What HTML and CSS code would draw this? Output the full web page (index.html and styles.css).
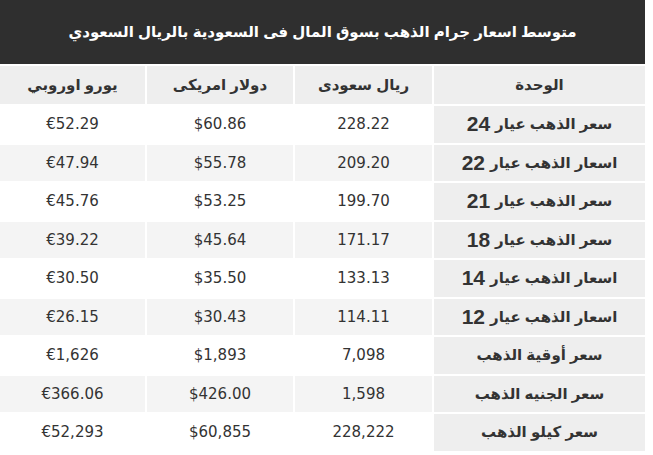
FILE: index.html
```html
<!DOCTYPE html>
<html lang="ar">
<head>
<meta charset="utf-8">
<link rel="stylesheet" href="styles.css">
</head>
<body>
<div class="wrap" dir="rtl">
  <div class="title">متوسط اسعار جرام الذهب بسوق المال فى السعودية بالريال السعودي</div>
  <div class="grid">
    <div class="th">الوحدة</div><div class="th">ريال سعودى</div><div class="th">دولار امريكى</div><div class="th">يورو اوروبي</div>

    <div class="lbl">سعر الذهب عيار <b>24</b></div><div class="c">228.22</div><div class="c">$60.86</div><div class="c">€52.29</div>
    <div class="lbl">اسعار الذهب عيار <b>22</b></div><div class="c alt">209.20</div><div class="c alt">$55.78</div><div class="c alt">€47.94</div>
    <div class="lbl">سعر الذهب عيار <b>21</b></div><div class="c">199.70</div><div class="c">$53.25</div><div class="c">€45.76</div>
    <div class="lbl">سعر الذهب عيار <b>18</b></div><div class="c alt">171.17</div><div class="c alt">$45.64</div><div class="c alt">€39.22</div>
    <div class="lbl">اسعار الذهب عيار <b>14</b></div><div class="c">133.13</div><div class="c">$35.50</div><div class="c">€30.50</div>
    <div class="lbl">اسعار الذهب عيار <b>12</b></div><div class="c alt">114.11</div><div class="c alt">$30.43</div><div class="c alt">€26.15</div>
    <div class="lbl">سعر أوقية الذهب</div><div class="c">7,098</div><div class="c">$1,893</div><div class="c">€1,626</div>
    <div class="lbl">سعر الجنيه الذهب</div><div class="c alt">1,598</div><div class="c alt">$426.00</div><div class="c alt">€366.06</div>
    <div class="lbl">سعر كيلو الذهب</div><div class="c">228,222</div><div class="c">$60,855</div><div class="c">€52,293</div>
  </div>
</div>
</body>
</html>
```

FILE: styles.css
```css
html, body {
  margin: 0;
  padding: 0;
  background: #fff;
}
.wrap {
  width: 645px;
}
.title {
  background: #2f2f2f;
  color: #fff;
  height: 64px;
  display: flex;
  align-items: center;
  justify-content: center;
  font-family: "Liberation Sans", "DejaVu Sans", sans-serif;
  font-weight: bold;
  font-size: 15px;
}
.grid {
  margin-top: 2px;
  display: grid;
  grid-template-columns: 211px 137px 146px 145px;
  grid-template-rows: 38px;
  grid-auto-rows: 36.5px;
  gap: 2px;
  color: #333;
}
.th {
  background: #eeeeee;
  display: flex;
  align-items: center;
  justify-content: center;
  font-family: "Liberation Sans", "DejaVu Sans", sans-serif;
  font-weight: bold;
  font-size: 15px;
  color: #333;
}
.lbl {
  background: #eeeeee;
  display: flex;
  align-items: center;
  justify-content: center;
  font-family: "Liberation Sans", "DejaVu Sans", sans-serif;
  font-weight: bold;
  font-size: 15px;
  color: #333;
  gap: 5px;
}
.lbl b {
  font-size: 21px;
  font-family: "Liberation Sans", sans-serif;
}
.c {
  background: #fff;
  display: flex;
  align-items: center;
  justify-content: center;
  font-family: "DejaVu Sans", sans-serif;
  font-size: 15px;
  color: #333;
}
.c.alt {
  background: #f4f4f4;
}
```
